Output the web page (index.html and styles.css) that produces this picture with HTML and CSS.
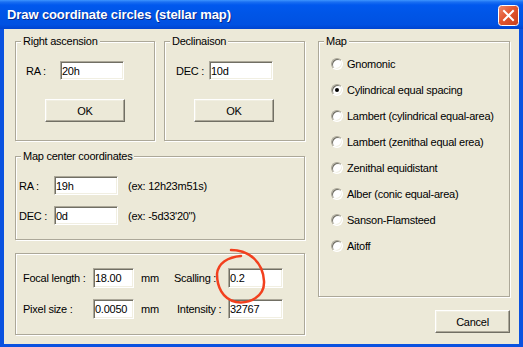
FILE: index.html
```html
<!DOCTYPE html>
<html lang="en">
<head>
  <meta charset="UTF-8">
  <meta name="viewport" content="width=device-width, initial-scale=1.0">
  <title>Draw coordinate circles (stellar map)</title>
  <link rel="stylesheet" href="styles.css">
</head>
<body>
  <div class="window">
    <div class="titlebar">
      <span class="title">Draw coordinate circles (stellar map)</span>
      <span class="close" aria-label="Close">
        <svg width="21" height="21" viewBox="0 0 21 21">
          <defs>
            <linearGradient id="closeGrad" x1="0" y1="0" x2="1" y2="1">
              <stop offset="0" stop-color="#F08A6C"/>
              <stop offset="0.45" stop-color="#E2562F"/>
              <stop offset="1" stop-color="#C8401C"/>
            </linearGradient>
          </defs>
          <rect x="0.5" y="0.5" width="20" height="20" rx="3" fill="url(#closeGrad)" stroke="#fff"/>
          <path d="M6 6 L15 15 M15 6 L6 15" stroke="#fff" stroke-width="2" stroke-linecap="square"/>
        </svg>
      </span>
    </div>

    <div class="client">
      <div class="left-col">
        <div class="top-row">
          <div class="group group-ra">
            <div class="group-title">Right ascension</div>
            <div class="field-row"><label class="lbl-ra">RA :</label><input class="edit edit-coord" value="20h"></div>
            <button class="btn btn-ok">OK</button>
          </div>
          <div class="group group-dec">
            <div class="group-title">Declinaison</div>
            <div class="field-row"><label class="lbl-dec">DEC :</label><input class="edit edit-coord" value="10d"></div>
            <button class="btn btn-ok">OK</button>
          </div>
        </div>

        <div class="group group-center">
          <div class="group-title">Map center coordinates</div>
          <div class="center-row first"><label class="lbl-center">RA :</label><input class="edit edit-coord" value="19h"><span class="hint">(ex: 12h23m51s)</span></div>
          <div class="center-row"><label class="lbl-center">DEC :</label><input class="edit edit-coord" value="0d"><span class="hint">(ex: -5d33'20'')</span></div>
        </div>

        <div class="group group-optics">
          <div class="optics-grid">
            <label>Focal length :</label><input class="edit edit-small" value="18.00"><span class="unit">mm</span>
            <label>Scalling :</label><input class="edit edit-wide" value="0.2">
            <label>Pixel size :</label><input class="edit edit-small" value="0.0050"><span class="unit">mm</span>
            <label class="lbl-int">Intensity :</label><input class="edit edit-wide" value="32767">
          </div>
        </div>
      </div>

      <div class="right-col">
        <div class="group group-map">
          <div class="group-title">Map</div>
          <ul class="radio-list">
            <li><span class="radio"></span>Gnomonic</li>
            <li><span class="radio checked"></span>Cylindrical equal spacing</li>
            <li><span class="radio"></span>Lambert (cylindrical equal-area)</li>
            <li><span class="radio"></span>Lambert (zenithal equal erea)</li>
            <li><span class="radio"></span>Zenithal equidistant</li>
            <li><span class="radio"></span>Alber (conic equal-area)</li>
            <li><span class="radio"></span>Sanson-Flamsteed</li>
            <li><span class="radio"></span>Aitoff</li>
          </ul>
        </div>
        <button class="btn btn-cancel">Cancel</button>
      </div>
    </div>

    <!-- hand drawn mark around the scalling field -->
    <svg class="scribble" width="523" height="347" viewBox="0 0 523 347">
      <path d="M231 250 C 249 250, 263 262, 264 281 C 265 297, 249 304, 236 302 C 222 299, 217 286, 217 274 C 218 263, 228 257, 241 256" fill="none" stroke="#F2401E" stroke-width="2.5" stroke-linecap="round"/>
    </svg>
  </div>
</body>
</html>
```

FILE: styles.css
```css
* { box-sizing: border-box; margin: 0; padding: 0; }
body {
  font-family: "Liberation Sans", Arial, sans-serif;
  font-size: 11px;
  letter-spacing: -0.25px;
  color: #000;
  background: #fff;
}
.window {
  position: relative;
  width: 523px;
  height: 347px;
  display: flex;
  flex-direction: column;
  background: #0A52E0;
}
.titlebar {
  height: 29px;
  flex: none;
  display: flex;
  align-items: center;
  justify-content: space-between;
  padding: 0 4px 0 7px;
  background: linear-gradient(#3D95FF 0, #1A6FF2 2px, #0058EE 5px, #0055E6 50%, #0051E2 85%, #0044D0 100%);
}
.title {
  color: #fff;
  font-family: "Liberation Sans", Arial, sans-serif;
  font-weight: bold;
  font-size: 13px;
  letter-spacing: -0.1px;
  text-shadow: 1px 1px 0 #0A2A8C;
}
.close { display: block; width: 21px; height: 21px; margin-top: 1px; }
.close svg { display: block; }

.client {
  flex: 1;
  margin: 0 4px 3px;
  background: #ECE9D8;
  display: flex;
  gap: 13px;
  padding: 12px 9px 0 11px;
}
.left-col { width: 290px; display: flex; flex-direction: column; }
.right-col { width: 192px; display: flex; flex-direction: column; }
.top-row { display: flex; gap: 9px; }

.group {
  border: 1px solid #ACA899;
  box-shadow: 1px 1px 0 #fff, inset 1px 1px 0 #fff;
}
.group-title {
  width: fit-content;
  margin: -7px 0 0 5px;
  padding: 0 2px;
  line-height: 13px;
  background: #ECE9D8;
}

.edit {
  display: block;
  height: 19px;
  font: inherit;
  letter-spacing: inherit;
  color: #000;
  background: #fff;
  padding: 0 1px;
  border: 1px solid;
  border-color: #ACA899 #fff #fff #ACA899;
  box-shadow: inset 1px 1px 0 #716F64, inset -1px -1px 0 #F1EFE2;
  outline: none;
}
.edit-coord { width: 64px; }
.edit-small { width: 41px; height: 20px; }
.edit-wide { width: 55px; height: 20px; }

.btn {
  display: block;
  font: inherit;
  letter-spacing: inherit;
  color: #000;
  background: #ECE9D8;
  border: 1px solid;
  border-color: #fff #716F64 #716F64 #fff;
  box-shadow: inset -1px -1px 0 #ACA899, inset 1px 1px 0 #F1EFE2;
}
.btn-ok { width: 80px; height: 23px; margin: 19px 0 0 29px; }
.btn-cancel { width: 75px; height: 23px; margin-top: 13px; align-self: flex-end; }

.group-ra, .group-dec { height: 100px; }
.group-ra { width: 140px; }
.group-dec { width: 141px; }
.field-row { display: flex; align-items: center; margin-top: 13px; }
.lbl-ra { width: 34px; margin-left: 10px; }
.lbl-dec { width: 33px; margin-left: 11px; }

.group-center { height: 84px; margin-top: 15px; }
.center-row { display: flex; align-items: center; margin-top: 11px; }
.center-row.first { margin-top: 13px; }
.lbl-center { width: 35px; margin-left: 3px; }
.hint { margin-left: 10px; }

.group-optics { height: 82px; margin-top: 13px; }
.optics-grid {
  display: grid;
  grid-template-columns: 70px 41px 40px 54px 55px;
  grid-auto-rows: 20px;
  row-gap: 11px;
  align-items: center;
  padding: 14px 0 0 7px;
}
.unit { padding-left: 7px; }
.lbl-int { padding-left: 3px; }

.group-map { height: 256px; }
.radio-list { list-style: none; margin-top: 3px; }
.radio-list li {
  height: 26px;
  display: flex;
  align-items: center;
  padding-left: 12px;
}
.radio {
  width: 12px;
  height: 12px;
  margin-right: 4px;
  border-radius: 50%;
  background: #fff;
  border: 1px solid;
  border-color: #ACA899 #fff #fff #ACA899;
  box-shadow: inset 1px 1px 0 #716F64, inset -1px -1px 0 #F1EFE2;
  display: flex;
  align-items: center;
  justify-content: center;
}
.radio.checked::after {
  content: "";
  width: 4px;
  height: 4px;
  border-radius: 50%;
  background: #000;
}

.scribble { position: absolute; left: 0; top: 0; pointer-events: none; }
```
